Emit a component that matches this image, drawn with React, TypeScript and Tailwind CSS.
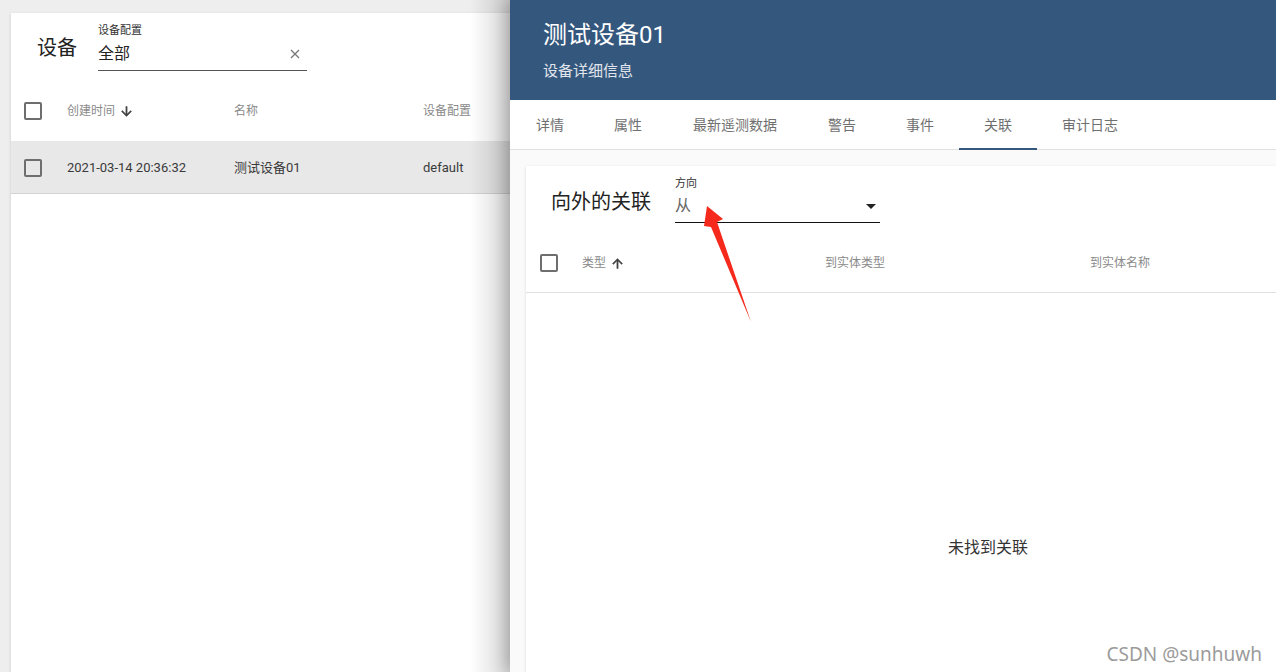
import React from 'react';

const font = { fontFamily: 'Roboto, "Noto Sans CJK SC", sans-serif' };

function Checkbox() {
  return <div className="w-[18px] h-[18px] border-2 border-[#6e6e6e] rounded-[2px] shrink-0" />;
}

function ArrowDown() {
  return (
    <svg width="15" height="15" viewBox="0 0 24 24" className="ml-1">
      <path d="M20 12l-1.41-1.41L13 16.17V4h-2v12.17l-5.58-5.59L4 12l8 8 8-8z" fill="#444" stroke="#444" strokeWidth="0.8" />
    </svg>
  );
}

function ArrowUp() {
  return (
    <svg width="15" height="15" viewBox="0 0 24 24" className="ml-1">
      <path d="M4 12l1.41 1.41L11 7.83V20h2V7.83l5.58 5.59L20 12l-8-8-8 8z" fill="#444" stroke="#444" strokeWidth="0.8" />
    </svg>
  );
}

const tabs = [
  { label: '详情', w: 'w-[78px]' },
  { label: '属性', w: 'w-[78px]' },
  { label: '最新遥测数据', w: 'w-[136px]' },
  { label: '警告', w: 'w-[78px]' },
  { label: '事件', w: 'w-[78px]' },
  { label: '关联', w: 'w-[78px]', active: true },
  { label: '审计日志', w: 'w-[106px]' },
];

export default function App() {
  return (
    <div className="relative w-[1276px] h-[672px] overflow-hidden bg-[#eeeeee] flex" style={font}>
      {/* Device list (left) */}
      <div className="relative w-[510px] shrink-0 overflow-hidden pt-[13px] pl-[11px]">
        <div className="w-[560px] h-full bg-white shadow-[0_1px_3px_rgba(0,0,0,0.15)]">
          {/* Header */}
          <div className="h-[72px] flex items-start pl-[26px] pt-[11px]">
            <div className="mt-[10px] text-xl leading-[28px] text-[#222]">设备</div>
            <div className="ml-[21px] w-[209px] border-b border-[#555] pb-[6px]">
              <div className="text-[11px] leading-[14px] text-[#333]">设备配置</div>
              <div className="mt-[6px] flex items-center justify-between">
                <span className="text-base leading-[20px] text-[#222]">全部</span>
                <svg width="10" height="10" viewBox="0 0 10 10" className="mr-[7px]">
                  <path d="M1 1L9 9M9 1L1 9" stroke="#777" strokeWidth="1.3" />
                </svg>
              </div>
            </div>
          </div>

          {/* Table header */}
          <div className="h-[56px] pb-[4px] flex items-center pl-[13px] text-xs text-[#8a8a8a]">
            <Checkbox />
            <div className="ml-[25px] w-[167px] flex items-center">
              创建时间
              <ArrowDown />
            </div>
            <div className="w-[189px]">名称</div>
            <div>设备配置</div>
          </div>

          {/* Row */}
          <div className="h-[53px] pt-[2px] flex items-center pl-[13px] bg-[#e8e8e8] border-b border-[#d3d3d3] text-[13px] text-[#3a3a3a]">
            <Checkbox />
            <div className="ml-[25px] w-[167px]">2021-03-14 20:36:32</div>
            <div className="w-[189px]">测试设备01</div>
            <div>default</div>
          </div>
        </div>
        <div className="absolute top-0 right-0 h-full w-[40px] bg-gradient-to-r from-transparent to-black/15" />
      </div>

      {/* Detail drawer (right) */}
      <div className="relative w-[766px] shrink-0 overflow-hidden bg-[#fafafa] shadow-[-4px_0_16px_rgba(0,0,0,0.25)] flex flex-col">
        <div className="h-[100px] shrink-0 bg-[#34577e] pl-[33px] pt-[18px] text-white">
          <div className="text-2xl leading-[34px]">测试设备01</div>
          <div className="mt-[10px] text-[15px] leading-[18px] text-white/85">设备详细信息</div>
        </div>

        <div className="h-[50px] shrink-0 bg-white border-b border-[#e0e0e0] flex pl-px">
          {tabs.map((t) => (
            <div
              key={t.label}
              className={`${t.w} h-full relative flex items-center justify-center text-sm text-[#707070]`}
            >
              {t.label}
              {t.active && <div className="absolute left-0 right-0 bottom-[-1px] h-[2px] bg-[#34577e]" />}
            </div>
          ))}
        </div>

        <div className="flex-1 pl-[16px] pt-[16px]">
          <div className="w-[924px] h-full bg-white shadow-[0_1px_3px_rgba(0,0,0,0.12)]">
            {/* Card header */}
            <div className="h-[70px] flex items-start pl-[25px] pt-[11px]">
              <div className="mt-[11px] text-xl leading-[28px] text-[#222]">向外的关联</div>
              <div className="ml-[24px] w-[205px] border-b border-[#111] pb-[6px]">
                <div className="text-[11px] leading-[14px] text-[#333]">方向</div>
                <div className="mt-[5px] flex items-center justify-between">
                  <span className="text-base leading-[20px] text-[#666]">从</span>
                  <svg width="10" height="5" viewBox="0 0 10 5" className="mr-[4px]">
                    <path d="M0 0h10L5 5z" fill="#222" />
                  </svg>
                </div>
              </div>
            </div>

            {/* Table header */}
            <div className="h-[57px] pb-[2px] flex items-center pl-[14px] text-xs text-[#8a8a8a] border-b border-[#e0e0e0]">
              <Checkbox />
              <div className="ml-[24px] w-[243px] flex items-center">
                类型
                <ArrowUp />
              </div>
              <div className="w-[265px]">到实体类型</div>
              <div>到实体名称</div>
            </div>

            <div className="pt-[244px] text-center text-base leading-[22px] text-[#333]">未找到关联</div>
          </div>
        </div>
      </div>

      {/* Annotation arrow */}
      <svg className="absolute left-0 top-0 pointer-events-none" width="1276" height="672">
        <polygon points="707,206 723,219 717,222 751,322 711,227 704,226" fill="#f52a1d" />
      </svg>

      {/* Watermark */}
      <div
        className="absolute right-[14px] bottom-[6px] text-[19px] leading-[24px] text-[#9b9b9b]"
        style={{ fontFamily: '"Noto Sans", "Open Sans", sans-serif' }}
      >
        CSDN @sunhuwh
      </div>
    </div>
  );
}
